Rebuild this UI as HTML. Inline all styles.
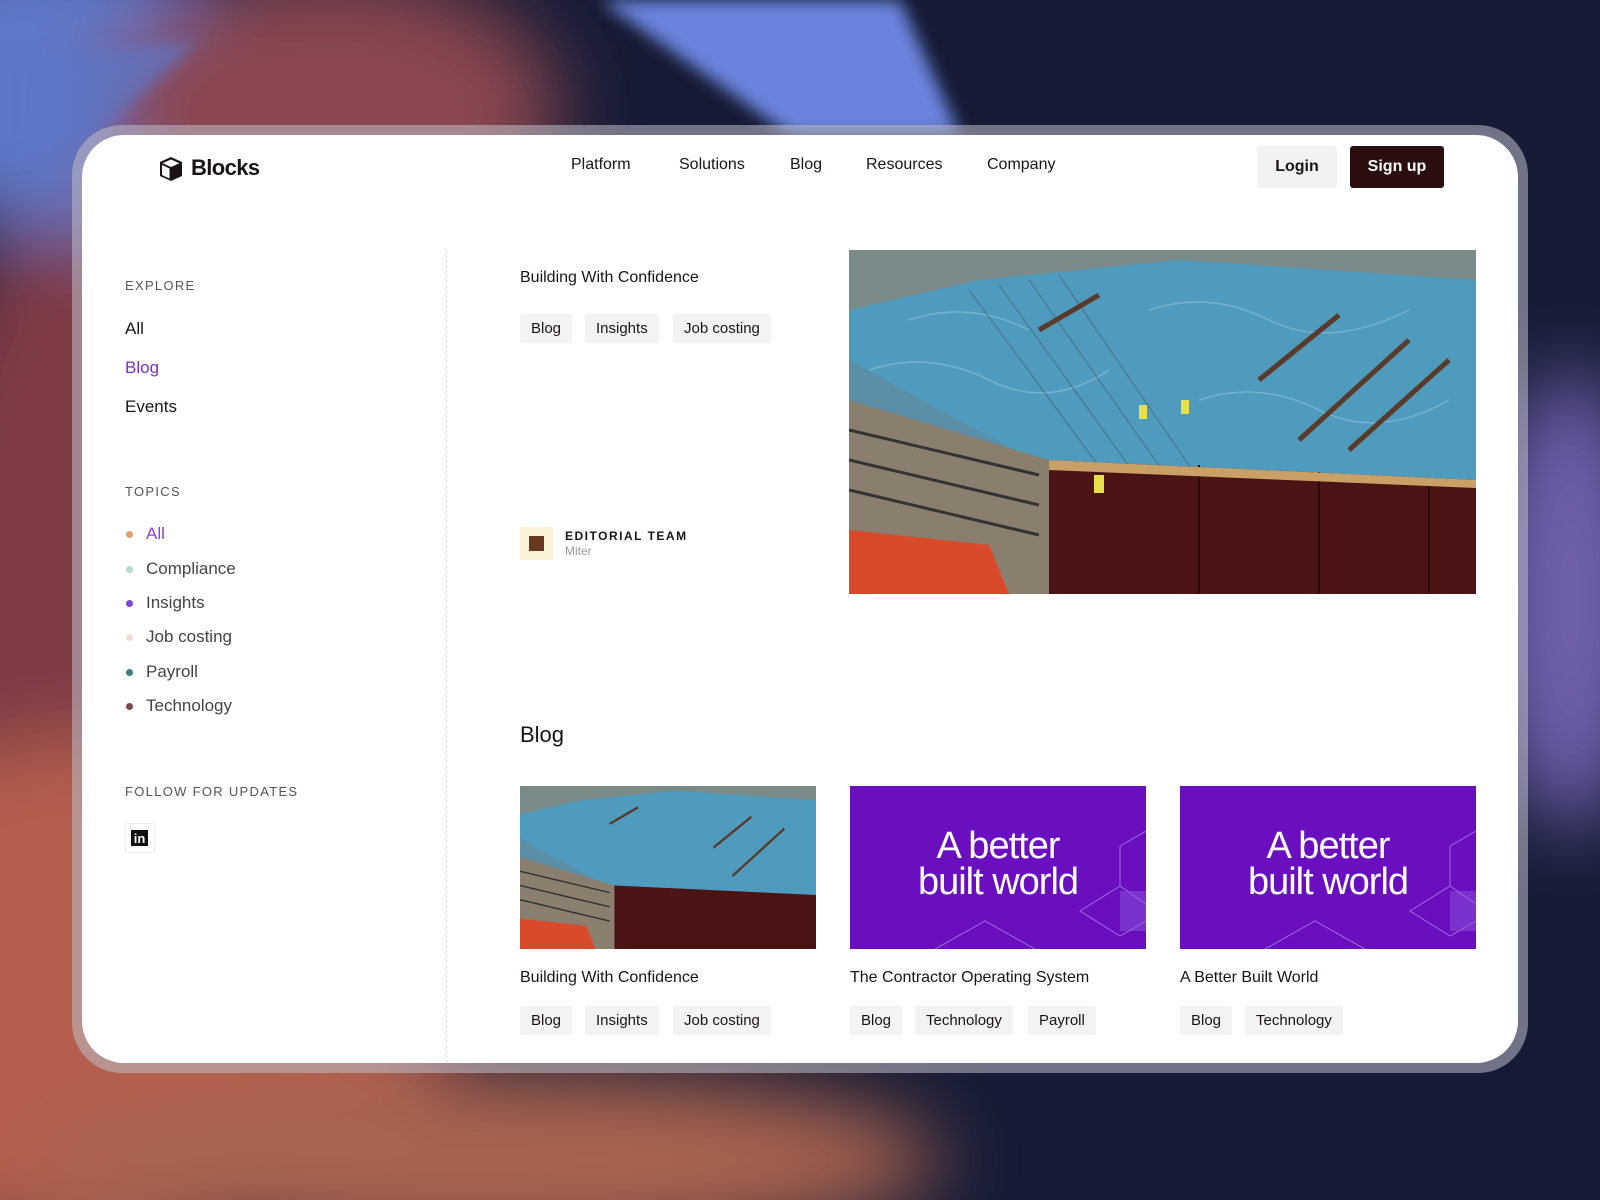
<!DOCTYPE html>
<html style="width:1600px;height:1200px;overflow:hidden"><head><meta charset="utf-8"><style>
*{margin:0;padding:0;box-sizing:border-box}
body{width:1600px;height:1200px;overflow:hidden;position:relative;font-family:"Liberation Sans",sans-serif;color:#1b1416;background:#151a33;}
.bg{position:absolute;left:0;top:0;display:block}
.frame{position:absolute;left:72px;top:125px;width:1456px;height:948px;border-radius:50px;background:rgba(190,190,200,.55)}
.panel{position:absolute;left:82px;top:135px;width:1436px;height:928px;border-radius:42px;background:#fff;overflow:hidden}
.a{position:absolute;white-space:nowrap}
.nav{font-size:16px;top:156px}
.lbl{font-size:13px;letter-spacing:1.3px;color:#555}
.ex{font-size:17px;left:125px}
.tp{font-size:17px;left:146px;color:#444}
.dot{position:absolute;left:126px;width:7px;height:7px;border-radius:50%}
.tag{position:absolute;height:29px;line-height:29px;padding:0 11px;background:#f3f3f3;font-size:15px;border-radius:2px}
.ttl{font-size:16px}
.purple{position:absolute;background:#6a0fc0;overflow:hidden;width:296px;height:163px;top:786px}
.purple .t{position:absolute;left:0;right:0;top:42px;text-align:center;color:#fff;font-size:38px;line-height:36px;letter-spacing:-1px}
</style></head><body>
<svg class="bg" width="1600" height="1200" viewBox="0 0 1600 1200">
<defs>
<filter id="b1" x="-50%" y="-50%" width="200%" height="200%"><feGaussianBlur stdDeviation="40"/></filter>
<filter id="b2"><feGaussianBlur stdDeviation="8"/></filter>
<clipPath id="c"><rect width="1600" height="1200"/></clipPath>
</defs>
<g clip-path="url(#c)">
<rect width="1600" height="1200" fill="#161b35"/>
<g filter="url(#b1)">
<ellipse cx="220" cy="650" rx="330" ry="560" fill="#7e3a44"/>
<ellipse cx="100" cy="1000" rx="320" ry="260" fill="#b55e4e"/>
<ellipse cx="480" cy="1160" rx="460" ry="90" fill="#a9634f"/>
<ellipse cx="60" cy="80" rx="200" ry="150" fill="#5f78c8"/>
<ellipse cx="330" cy="110" rx="230" ry="140" fill="#8a4650"/>
<ellipse cx="1570" cy="600" rx="80" ry="230" fill="#6f62ad"/>
</g>
<g filter="url(#b2)">
<polygon points="600,0 900,0 960,135 790,135" fill="#6a84dc"/>
<polygon points="0,60 200,40 90,140 0,160" fill="#5b76c8" opacity=".7"/>
</g>
</g>
</svg>
<div class="frame"></div>
<div class="panel"></div>

<svg class="a" style="left:157px;top:155px" width="28" height="28" viewBox="0 0 28 28"><path d="M14 2 L25 7 L25 21 L14 26 L3 21 L3 7 Z" fill="#1b1416"/><path d="M14 4.5 L22.5 8.3 L14 12 L5.5 8.3 Z" fill="#fff"/><path d="M5 10 L12.5 13.5 L12.5 23.5 L5 20 Z" fill="#fff"/></svg>
<div class="a" style="left:191px;top:155px;font-size:22px;font-weight:bold;letter-spacing:-.6px">Blocks</div>

<div class="a nav" style="left:571px">Platform</div>
<div class="a nav" style="left:679px">Solutions</div>
<div class="a nav" style="left:790px">Blog</div>
<div class="a nav" style="left:866px">Resources</div>
<div class="a nav" style="left:987px">Company</div>
<div class="a" style="left:1257px;top:146px;width:80px;height:42px;background:#f2f2f2;border-radius:3px;text-align:center;line-height:42px;font-size:16px;font-weight:bold">Login</div>
<div class="a" style="left:1350px;top:146px;width:94px;height:42px;background:#2a0e10;border-radius:3px;text-align:center;line-height:42px;font-size:16px;font-weight:bold;color:#fff">Sign up</div>

<div class="a" style="left:446px;top:250px;height:813px;border-left:1px dashed #e2e2e2"></div>

<div class="a lbl" style="left:125px;top:278px">EXPLORE</div>
<div class="a ex" style="top:319px">All</div>
<div class="a ex" style="top:358px;color:#7a2fd0">Blog</div>
<div class="a ex" style="top:397px">Events</div>

<div class="a lbl" style="left:125px;top:484px">TOPICS</div>
<div class="dot" style="top:531px;background:#e59a72"></div><div class="a tp" style="top:524px;color:#8a3fd6">All</div>
<div class="dot" style="top:566px;background:#b8dcc9"></div><div class="a tp" style="top:559px">Compliance</div>
<div class="dot" style="top:600px;background:#7b45d0"></div><div class="a tp" style="top:593px">Insights</div>
<div class="dot" style="top:634px;background:#f3dcd6"></div><div class="a tp" style="top:627px">Job costing</div>
<div class="dot" style="top:669px;background:#3c7f78"></div><div class="a tp" style="top:662px">Payroll</div>
<div class="dot" style="top:703px;background:#7a4a4a"></div><div class="a tp" style="top:696px">Technology</div>

<div class="a lbl" style="left:125px;top:784px">FOLLOW FOR UPDATES</div>
<div class="a" style="left:125px;top:823px;width:30px;height:30px;border:1px solid #eee"></div>
<div class="a" style="left:131px;top:830px;width:17px;height:16px;background:#111;color:#fff;font-size:13px;font-weight:bold;line-height:17px;text-align:center">in</div>

<div class="a ttl" style="left:520px;top:269px">Building With Confidence</div>
<div class="tag" style="left:520px;top:314px">Blog</div>
<div class="tag" style="left:585px;top:314px">Insights</div>
<div class="tag" style="left:673px;top:314px">Job costing</div>

<div class="a" style="left:520px;top:527px;width:33px;height:33px;background:#fbf1d8"></div>
<div class="a" style="left:529px;top:536px;width:15px;height:15px;background:#6b3a1e"></div>
<div class="a" style="left:565px;top:529px;font-size:12px;font-weight:bold;letter-spacing:1.5px">EDITORIAL TEAM</div>
<div class="a" style="left:565px;top:544px;font-size:12px;color:#999">Miter</div>

<svg class="a" style="left:849px;top:250px" width="627" height="344" viewBox="0 0 627 344" preserveAspectRatio="none">
<rect width="627" height="344" fill="#5b8fa8"/>
<polygon points="0,0 627,0 627,40 0,90" fill="#7a8a88"/>
<polygon points="0,60 130,30 330,10 627,30 627,230 220,230 0,110" fill="#4f9bbd"/>
<g stroke="#8cc3d8" stroke-width="1.5" opacity=".6" fill="none"><path d="M20 120 Q80 100 140 130 T260 120"/><path d="M300 60 Q360 40 420 70 T560 60"/><path d="M350 150 Q410 130 470 160 T600 150"/><path d="M60 70 Q120 50 180 80"/></g>
<g stroke="#444" stroke-width="1" opacity=".5"><path d="M120 40 L260 230 M150 35 L290 230 M180 30 L320 230 M210 25 L350 230"/></g>
<polygon points="0,150 200,210 200,344 0,344" fill="#8a7f6f"/>
<g stroke="#333" stroke-width="3"><line x1="0" y1="180" x2="190" y2="225"/><line x1="0" y1="210" x2="190" y2="255"/><line x1="0" y1="240" x2="190" y2="285"/></g>
<polygon points="200,210 627,230 627,344 200,344" fill="#4a1414"/>
<g stroke="#2a0a0a" stroke-width="2"><line x1="350" y1="215" x2="350" y2="344"/><line x1="470" y1="222" x2="470" y2="344"/><line x1="580" y1="228" x2="580" y2="344"/></g>
<polygon points="200,210 627,230 627,238 200,220" fill="#c9a066"/>
<polygon points="0,280 140,295 160,344 0,344" fill="#d84a2a"/>
<g stroke="#5a3a2a" stroke-width="5"><line x1="190" y1="80" x2="250" y2="45"/><line x1="410" y1="130" x2="490" y2="65"/><line x1="450" y1="190" x2="560" y2="90"/><line x1="500" y1="200" x2="600" y2="110"/></g>
<g fill="#e7e04a"><rect x="290" y="155" width="8" height="14"/><rect x="332" y="150" width="8" height="14"/><rect x="245" y="225" width="10" height="18"/></g>
</svg>

<div class="a" style="left:520px;top:722px;font-size:22px">Blog</div>

<svg class="a" style="left:520px;top:786px" width="296" height="163" viewBox="0 0 627 344" preserveAspectRatio="none">
<rect width="627" height="344" fill="#5b8fa8"/>
<polygon points="0,0 627,0 627,40 0,90" fill="#7a8a88"/>
<polygon points="0,60 130,30 330,10 627,30 627,230 220,230 0,110" fill="#4f9bbd"/>
<polygon points="0,150 200,210 200,344 0,344" fill="#8a7f6f"/>
<g stroke="#333" stroke-width="3"><line x1="0" y1="180" x2="190" y2="225"/><line x1="0" y1="210" x2="190" y2="255"/><line x1="0" y1="240" x2="190" y2="285"/></g>
<polygon points="200,210 627,230 627,344 200,344" fill="#4a1414"/>
<polygon points="0,280 140,295 160,344 0,344" fill="#d84a2a"/>
<g stroke="#5a3a2a" stroke-width="5"><line x1="190" y1="80" x2="250" y2="45"/><line x1="410" y1="130" x2="490" y2="65"/><line x1="450" y1="190" x2="560" y2="90"/></g>
</svg>
<div class="purple" style="left:850px"><div class="t">A better<br>built world</div>
<svg style="position:absolute;left:0;top:0" width="296" height="163"><g stroke="#a06ae0" fill="none" stroke-width="1"><path d="M270 60 L296 45 M270 60 L270 100 L296 118 M270 100 L230 125 L270 150 L296 135 M85 163 L135 135 L185 163"/></g><rect x="270" y="105" width="26" height="40" fill="#8b55d8" opacity=".5"/></svg></div>
<div class="purple" style="left:1180px"><div class="t">A better<br>built world</div>
<svg style="position:absolute;left:0;top:0" width="296" height="163"><g stroke="#a06ae0" fill="none" stroke-width="1"><path d="M270 60 L296 45 M270 60 L270 100 L296 118 M270 100 L230 125 L270 150 L296 135 M85 163 L135 135 L185 163"/></g><rect x="270" y="105" width="26" height="40" fill="#8b55d8" opacity=".5"/></svg></div>

<div class="a ttl" style="left:520px;top:969px">Building With Confidence</div>
<div class="a ttl" style="left:850px;top:969px">The Contractor Operating System</div>
<div class="a ttl" style="left:1180px;top:969px">A Better Built World</div>

<div class="tag" style="left:520px;top:1006px">Blog</div>
<div class="tag" style="left:585px;top:1006px">Insights</div>
<div class="tag" style="left:673px;top:1006px">Job costing</div>
<div class="tag" style="left:850px;top:1006px">Blog</div>
<div class="tag" style="left:915px;top:1006px">Technology</div>
<div class="tag" style="left:1028px;top:1006px">Payroll</div>
<div class="tag" style="left:1180px;top:1006px">Blog</div>
<div class="tag" style="left:1245px;top:1006px">Technology</div>
</body></html>
